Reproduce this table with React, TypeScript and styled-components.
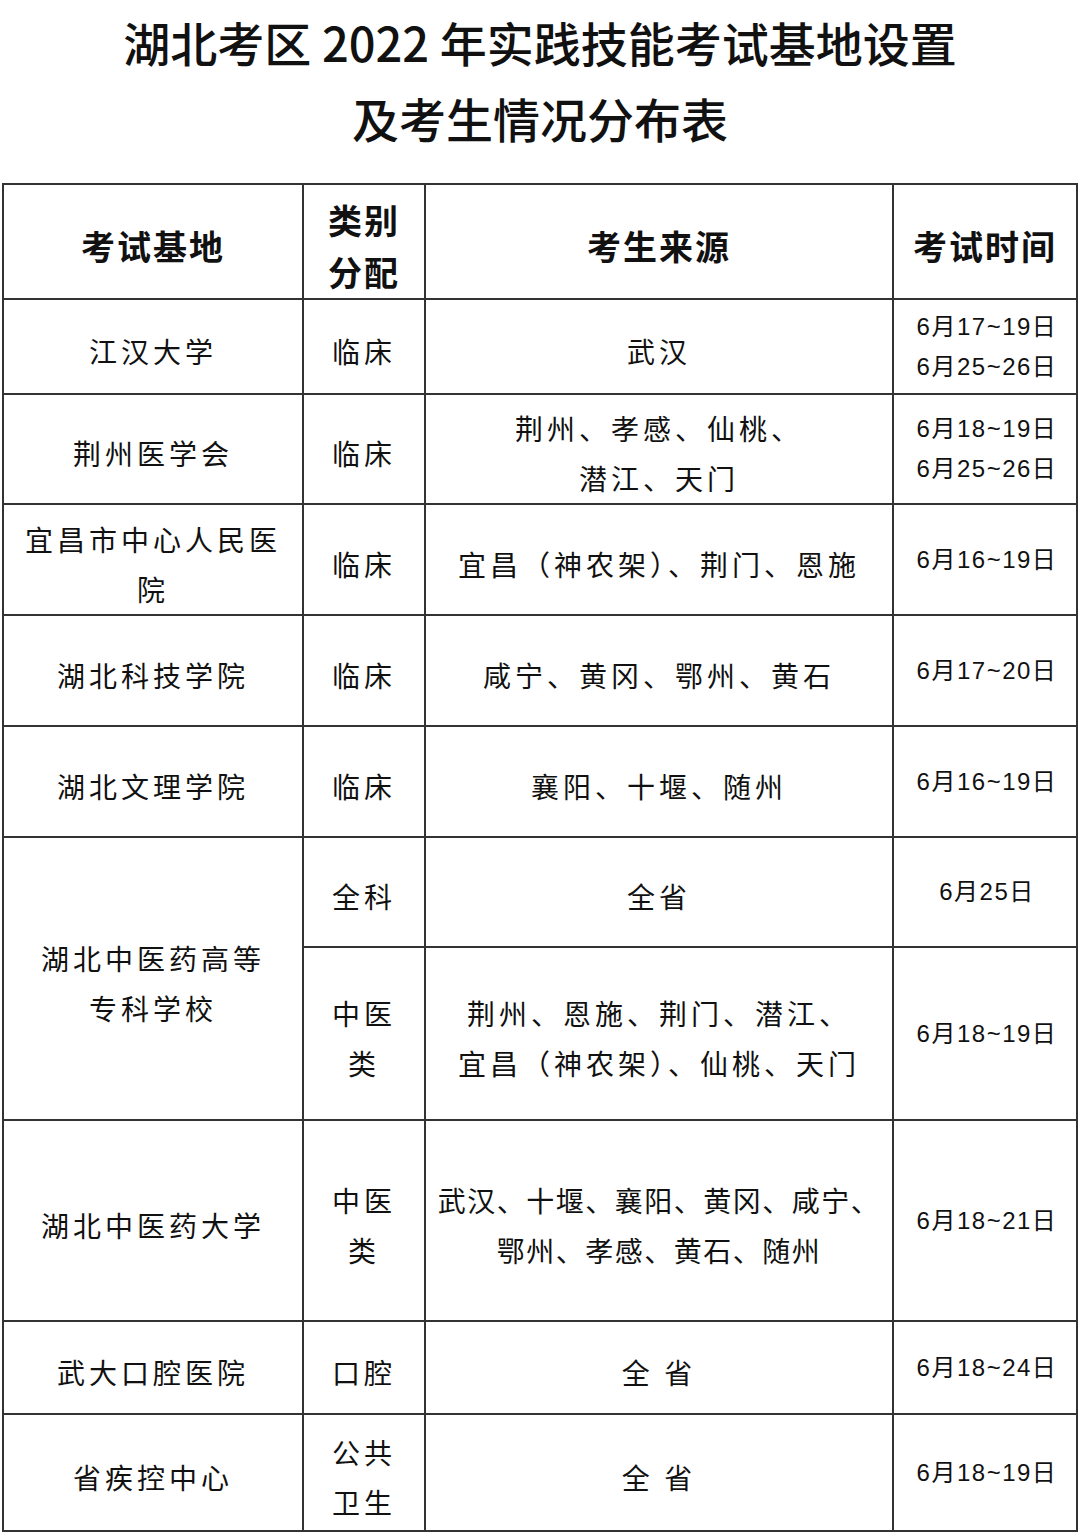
import React from 'react';
import styled, { createGlobalStyle } from 'styled-components';

const GlobalStyle = createGlobalStyle`
  html, body {
    margin: 0;
    padding: 0;
    background: #ffffff;
  }
  body {
    font-family: "Noto Sans CJK SC", "Noto Sans", sans-serif;
    color: #111;
  }
`;

const Page = styled.div`
  width: 1080px;
  padding: 4px 0 0;
`;

const Title = styled.h1`
  margin: 0 0 27px;
  font-size: 47px;
  font-weight: 500;
  line-height: 76px;
  text-align: center;
  color: #111;
`;

const Table = styled.table`
  margin-left: 2px;
  width: 1074px;
  border-collapse: collapse;
  table-layout: fixed;
  border: 2px solid #333;
`;

const Tr = styled.tr<{ $h: number }>`
  height: ${(p) => p.$h}px;
`;

const HeadCell = styled.th`
  border: 2px solid #333;
  padding: 9px 0 0;
  font-size: 34px;
  font-weight: 700;
  line-height: 52px;
  text-align: center;
  vertical-align: middle;
  letter-spacing: 2px;
`;

const Cell = styled.td<{ $tight?: boolean }>`
  border: 2px solid #333;
  padding: 8px 0 0;
  font-size: 28px;
  font-weight: 400;
  line-height: 50px;
  text-align: center;
  vertical-align: middle;
  letter-spacing: ${(p) => (p.$tight ? '1.5px' : '4px')};
`;

const DateCell = styled.td`
  border: 2px solid #333;
  padding: 0 0 0 4px;
  font-family: "Liberation Sans", "Noto Sans CJK SC", sans-serif;
  font-size: 24px;
  line-height: 40px;
  text-align: center;
  vertical-align: middle;
  letter-spacing: 1.5px;
`;

type Row = {
  base?: string[];
  baseSpan?: number;
  type: string[];
  source: string[];
  dates: string[];
  h: number;
  tight?: boolean;
};

const rows: Row[] = [
  { base: ['江汉大学'], type: ['临床'], source: ['武汉'], dates: ['6月17~19日', '6月25~26日'], h: 95 },
  { base: ['荆州医学会'], type: ['临床'], source: ['荆州、孝感、仙桃、', '潜江、天门'], dates: ['6月18~19日', '6月25~26日'], h: 110 },
  { base: ['宜昌市中心人民医', '院'], type: ['临床'], source: ['宜昌（神农架）、荆门、恩施'], dates: ['6月16~19日'], h: 111 },
  { base: ['湖北科技学院'], type: ['临床'], source: ['咸宁、黄冈、鄂州、黄石'], dates: ['6月17~20日'], h: 111 },
  { base: ['湖北文理学院'], type: ['临床'], source: ['襄阳、十堰、随州'], dates: ['6月16~19日'], h: 111 },
  { base: ['湖北中医药高等', '专科学校'], baseSpan: 2, type: ['全科'], source: ['全省'], dates: ['6月25日'], h: 110 },
  { type: ['中医', '类'], source: ['荆州、恩施、荆门、潜江、', '宜昌（神农架）、仙桃、天门'], dates: ['6月18~19日'], h: 173 },
  { base: ['湖北中医药大学'], type: ['中医', '类'], source: ['武汉、十堰、襄阳、黄冈、咸宁、', '鄂州、孝感、黄石、随州'], dates: ['6月18~21日'], h: 201, tight: true },
  { base: ['武大口腔医院'], type: ['口腔'], source: ['全 省'], dates: ['6月18~24日'], h: 93 },
  { base: ['省疾控中心'], type: ['公共', '卫生'], source: ['全 省'], dates: ['6月18~19日'], h: 117 },
];

const Lines: React.FC<{ lines: string[] }> = ({ lines }) => (
  <>
    {lines.map((l, i) => (
      <div key={i}>{l}</div>
    ))}
  </>
);

const App: React.FC = () => {
  return (
    <Page>
      <GlobalStyle />
      <Title>
        湖北考区 2022 年实践技能考试基地设置
        <br />
        及考生情况分布表
      </Title>
      <Table>
        <colgroup>
          <col style={{ width: 300 }} />
          <col style={{ width: 122 }} />
          <col style={{ width: 468 }} />
          <col style={{ width: 184 }} />
        </colgroup>
        <thead>
          <Tr $h={115}>
            <HeadCell>考试基地</HeadCell>
            <HeadCell>
              类别
              <br />
              分配
            </HeadCell>
            <HeadCell>考生来源</HeadCell>
            <HeadCell>考试时间</HeadCell>
          </Tr>
        </thead>
        <tbody>
          {rows.map((r, i) => (
            <Tr key={i} $h={r.h}>
              {r.base && (
                <Cell rowSpan={r.baseSpan}>
                  <Lines lines={r.base} />
                </Cell>
              )}
              <Cell>
                <Lines lines={r.type} />
              </Cell>
              <Cell $tight={r.tight}>
                <Lines lines={r.source} />
              </Cell>
              <DateCell>
                <Lines lines={r.dates} />
              </DateCell>
            </Tr>
          ))}
        </tbody>
      </Table>
    </Page>
  );
};

export default App;
